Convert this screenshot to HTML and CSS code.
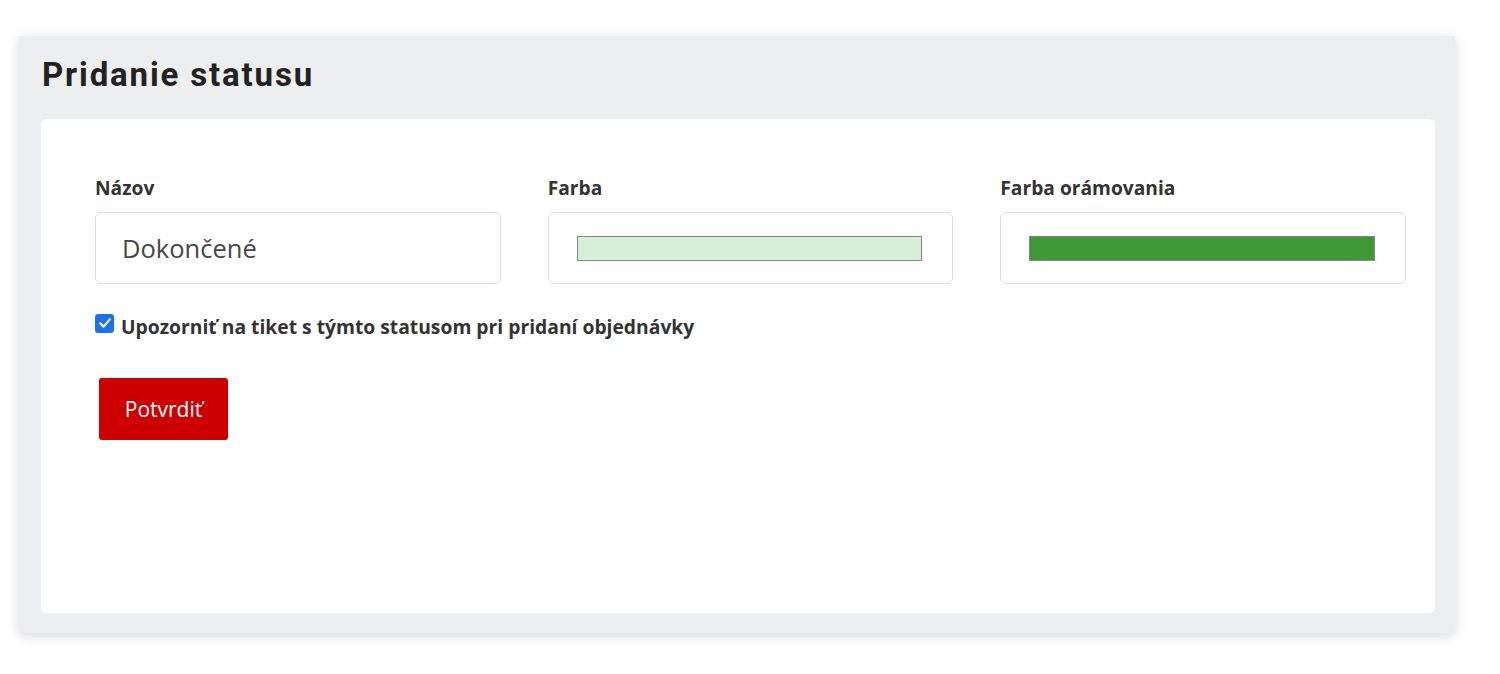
FILE: index.html
```html
<!DOCTYPE html>
<html lang="sk">
<head>
<meta charset="utf-8">
<link rel="stylesheet" href="styles.css">
</head>
<body>
<div class="page">
  <section class="panel">
    <h1 class="title">Pridanie statusu</h1>
    <div class="card">
      <div class="fields">
        <div class="field">
          <label class="label">Názov</label>
          <div class="input"><span class="value">Dokončené</span></div>
        </div>
        <div class="field">
          <label class="label">Farba</label>
          <div class="input"><span class="swatch swatch-light"></span></div>
        </div>
        <div class="field">
          <label class="label">Farba orámovania</label>
          <div class="input"><span class="swatch swatch-dark"></span></div>
        </div>
      </div>
      <label class="check">
        <span class="box"><svg viewBox="0 0 18 18" width="18" height="18"><path d="M4.2 9.3 L7.6 12.6 L13.8 5.4" fill="none" stroke="#fff" stroke-width="2.2" stroke-linecap="round" stroke-linejoin="round"/></svg></span>
        <span class="check-text">Upozorniť na tiket s týmto statusom pri pridaní objednávky</span>
      </label>
      <button class="btn">Potvrdiť</button>
    </div>
  </section>
</div>
</body>
</html>
```

FILE: styles.css
```css
* { box-sizing: border-box; }
html, body { margin: 0; padding: 0; background: #fff; }
body { font-family: "Open Sans", "Lato", sans-serif; color: #333; }
.page { padding: 36px 45px 41px 19px; }
.panel {
  background: #edeef0;
  height: 597px;
  padding: 0 20px 20px 22px;
  box-shadow: 0 3px 12px rgba(0,0,0,0.14);
  display: flex;
  flex-direction: column;
}
.title {
  font-family: "Roboto", sans-serif;
  font-weight: 700;
  font-size: 33px;
  letter-spacing: 1.85px;
  color: #222;
  margin: 0;
  height: 83px;
  padding: 20px 0 0 1px;
  line-height: 38px;
}
.card {
  flex: 1;
  background: #fff;
  border-radius: 6px;
  padding: 58px 29px 0 54px;
}
.fields {
  display: grid;
  grid-template-columns: repeat(3, 1fr);
  column-gap: 47px;
}
.label {
  display: block;
  font-weight: 700;
  font-size: 19.2px;
  line-height: 22px;
  color: #333;
  margin-bottom: 13px;
}
.input {
  height: 72px;
  border: 1px solid #dcdde3;
  border-radius: 6px;
  display: flex;
  align-items: center;
  padding: 0 30px 0 26px;
}
.value { font-size: 25.5px; color: #464646; }
.swatch { display: block; width: 100%; height: 25px; border: 1px solid #858585; margin: 1px 0 0 2px; }
.swatch-light { background: #d7efd9; }
.swatch-dark { background: #3f9735; }
.check {
  display: flex;
  align-items: center;
  gap: 7px;
  margin-top: 30px;
  height: 24px;
}
.box {
  width: 19px; height: 19px;
  background: #1a73e8;
  border-radius: 3px;
  display: flex; align-items: center; justify-content: center;
  margin-top: -6px;
}
.check-text { font-weight: 700; font-size: 19.3px; color: #333; }
.btn {
  display: block;
  margin: 40px 0 0 4px;
  width: 129px; height: 62px;
  background: #cc0000;
  border: 0;
  border-radius: 3px;
  color: #fff;
  font-family: "Open Sans", "Lato", sans-serif;
  font-size: 21px;
}
```
